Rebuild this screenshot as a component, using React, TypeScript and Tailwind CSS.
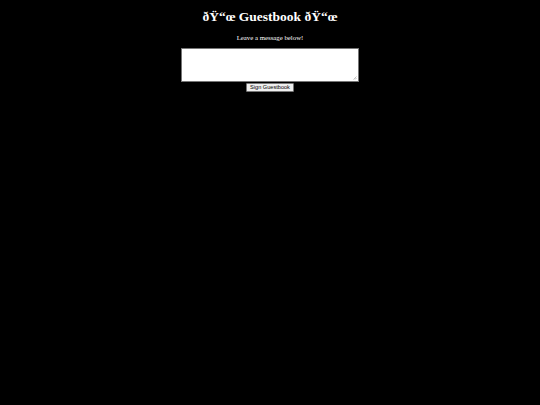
export default function App() {
  return (
    <div className="min-h-screen w-full bg-black flex flex-col items-center text-white font-['Liberation_Serif','Times_New_Roman',serif]">
      <h1 className="mt-[9px] text-[13.5px] leading-[16px] font-bold">
        {'\u00F0\u0178\u201C\u0153 Guestbook \u00F0\u0178\u201C\u0153'}
      </h1>
      <p className="mt-[8.6px] text-[6.8px] leading-[8px]">Leave a message below!</p>
      <div className="relative mt-[6.4px] w-[178px] h-[34px]">
        <textarea className="block w-full h-full bg-white border border-[#767676] resize-none text-black" />
        <svg className="absolute right-[2px] bottom-[2px]" width="4" height="4" viewBox="0 0 4 4">
          <path d="M0.5 3.5 L3.5 0.5 M2 3.5 L3.5 2" stroke="#999" strokeWidth="0.6" />
        </svg>
      </div>
      <button className="mt-[1.4px] h-[9px] px-[3px] bg-[#efefef] border border-[#767676] rounded-[1px] text-black text-[5.6px] leading-[7px] font-['Liberation_Sans',Arial,sans-serif]">
        Sign Guestbook
      </button>
    </div>
  );
}
